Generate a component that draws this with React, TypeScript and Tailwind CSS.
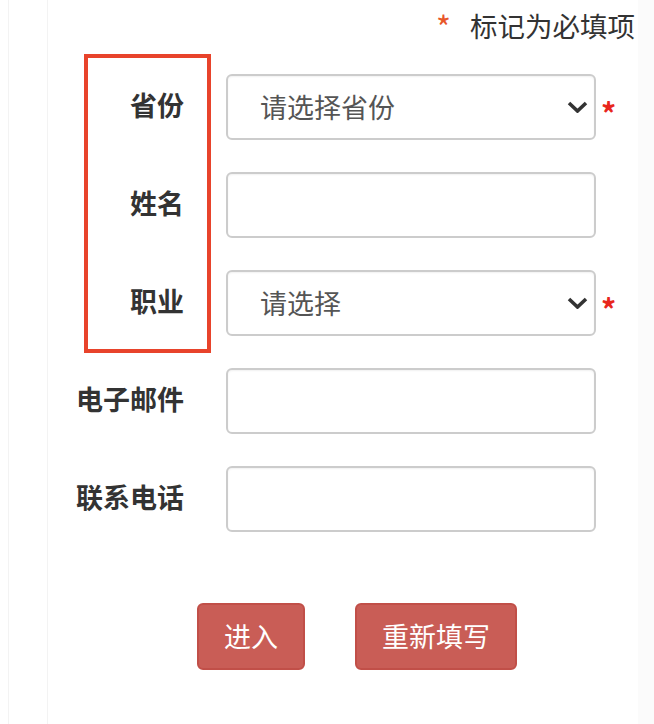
import React from 'react';

const font = { fontFamily: '"Noto Sans CJK SC", "Noto Sans", sans-serif' };

const Chevron: React.FC = () => (
    <svg className="pointer-events-none absolute right-[8px] top-1/2 -translate-y-1/2" width="21" height="12" viewBox="0 0 21 12">
        <polyline points="2,2 10.5,10 19,2" fill="none" stroke="#333" strokeWidth="3.6" strokeLinejoin="miter" />
    </svg>
);

const Star: React.FC = () => (
    <span className="ml-[5px] translate-y-[5px] text-[30px] font-bold leading-none text-[#e8261c]">*</span>
);

const Row: React.FC<{ label: string; children: React.ReactNode; required?: boolean }> = ({ label, children, required }) => (
    <div className="flex h-[66px] items-center">
        <label className="w-[136px] pb-[6px] text-right text-[27px] font-bold leading-none text-[#333]">{label}</label>
        <div className="relative ml-[42px] h-[66px] w-[370px]">{children}</div>
        {required && <Star />}
    </div>
);

const inputCls = 'h-full w-full rounded-[6px] border-2 border-[#cccccc] bg-white pl-[32px] text-[27px] text-[#555] shadow-[inset_0_1px_2px_rgba(0,0,0,0.06)] outline-none';

const App: React.FC = () => {
    return (
        <div className="flex min-h-[724px] w-full bg-white" style={font}>
            <div className="w-[8px] shrink-0" />
            <div className="w-[39px] shrink-0 border-l border-[#f3f3f3]" />
            <div className="relative flex-1 border-l border-[#f3f3f3]">
                <div className="h-[45px] pr-[3px] pt-[5px] text-right text-[27.5px] leading-[40px] text-[#333]">
                    <span className="relative top-[3px] mr-[19px] text-[32px] leading-[0] text-[#e8572a]">*</span>标记为必填项
                </div>

                <div className="mt-[29px] flex flex-col gap-[32px]">
                    <Row label="省份" required>
                        <select className={inputCls + ' appearance-none'} defaultValue="">
                            <option value="">请选择省份</option>
                        </select>
                        <Chevron />
                    </Row>
                    <Row label="姓名">
                        <input className={inputCls} />
                    </Row>
                    <Row label="职业" required>
                        <select className={inputCls + ' appearance-none'} defaultValue="">
                            <option value="">请选择</option>
                        </select>
                        <Chevron />
                    </Row>
                    <Row label="电子邮件">
                        <input className={inputCls} />
                    </Row>
                    <Row label="联系电话">
                        <input className={inputCls} />
                    </Row>
                </div>

                <div className="mt-[71px] flex gap-[50px] pl-[149px]">
                    <button className="h-[67px] rounded-[6px] border-2 border-[#c14f48] bg-[#c95d56] px-[25px] text-[27px] text-white">进入</button>
                    <button className="h-[67px] rounded-[6px] border-2 border-[#c14f48] bg-[#c95d56] px-[25px] text-[27px] text-white">重新填写</button>
                </div>

                {/* highlight box */}
                <div className="pointer-events-none absolute left-[36px] top-[54px] h-[299px] w-[127px] border-[4px] border-[#e8432b]" />
            </div>
            <div className="w-[16px] shrink-0 bg-[#fbfbfb]" />
        </div>
    );
};

export default App;
